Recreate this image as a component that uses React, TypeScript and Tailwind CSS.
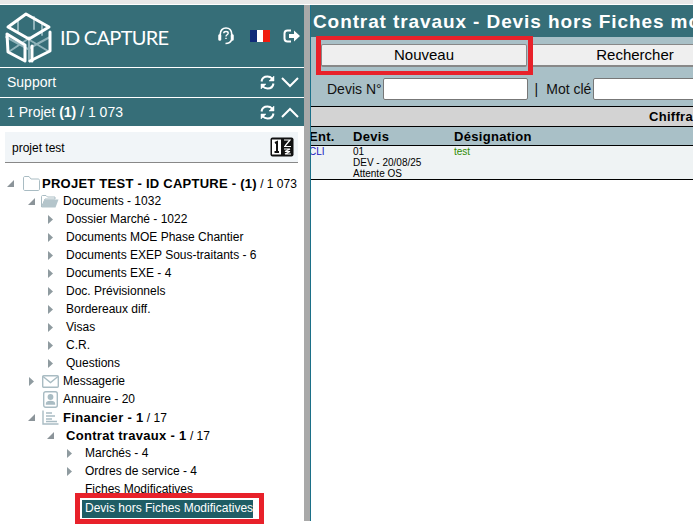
import { ReactNode } from 'react';

const TEAL = 'bg-[#366e78]';

function Logo() {
  return (
    <svg width="50" height="52" viewBox="0 0 50 52" fill="none" strokeLinejoin="round" strokeLinecap="round">
      <g stroke="#8fb3ba" strokeWidth="2">
        <path d="M14 10 L14 20 M30 6 L30 18 M25 26 L25 50 M2 26 L24 38 M24 38 L46 26 M6 40 L24 28 L44 40 M38 12 L38 24" />
      </g>
      <g stroke="#ffffff" strokeWidth="3">
        <path d="M22 3 L45 16 L25 28 L4 16 Z" />
        <path d="M3 23 L21 34 L21 50 L4 41 Z" />
        <path d="M26 50 L46 40 L46 21" />
        <path d="M28 35 L28 50" />
      </g>
    </svg>
  );
}

function Refresh() {
  return (
    <svg width="15" height="15" viewBox="0 0 15 15" fill="none" stroke="#fff" strokeWidth="2">
      <path d="M1.500 6.500 C2 3 4.500 1.500 7.500 1.500 C9.500 1.500 11 2.300 12.300 3.600" />
      <path d="M13.500 8.500 C13 12 10.500 13.500 7.500 13.500 C5.500 13.500 4 12.700 2.700 11.400" />
      <path d="M14 1 L14 6 L9 6 Z" fill="#fff" strokeWidth="0.500" />
      <path d="M1 14 L1 9 L6 9 Z" fill="#fff" strokeWidth="0.500" />
    </svg>
  );
}

function Chevron({ up }: { up?: boolean }) {
  return (
    <svg width="18" height="11" viewBox="0 0 18 11" fill="none" stroke="#fff" strokeWidth="2">
      <path d={up ? 'M1 10 L9 2 L17 10' : 'M1 1 L9 9 L17 1'} />
    </svg>
  );
}

function Headset() {
  return (
    <svg width="16" height="18" viewBox="0 0 16 18" fill="none" stroke="#fff" strokeWidth="1.700">
      <path d="M2.200 10 V7.500 C2.200 3.300 4.800 1 8 1 C11.200 1 13.800 3.300 13.800 7.500 V10" />
      <rect x="0.500" y="7.500" width="2.500" height="6" rx="1" fill="#fff" strokeWidth="0.500" />
      <rect x="13" y="7.500" width="2.500" height="6" rx="1" fill="#fff" strokeWidth="0.500" />
      <path d="M13.500 13 C12.500 15.800 10.500 16.500 7.500 16.500" />
      <path d="M5.800 6.200 C5.800 4 10.200 4 10.200 6.200 C10.200 7.800 8 7.800 8 9.500 M8 10.800 V12" strokeWidth="1.400" />
    </svg>
  );
}

function Logout() {
  return (
    <svg width="18" height="14" viewBox="0 0 18 14">
      <path d="M8 1.500 H4.500 C2.500 1.500 1.500 2.500 1.500 4.500 V9.500 C1.500 11.500 2.500 12.500 4.500 12.500 H8" fill="none" stroke="#fff" strokeWidth="2" />
      <path d="M6 5 H11 V1.500 L17 7 L11 12.500 V9 H6 Z" fill="#fff" />
    </svg>
  );
}

function SortIcon() {
  return (
    <svg width="24" height="20" viewBox="0 0 24 20">
      <rect x="0.500" y="0.500" width="23" height="19" rx="2" fill="#111" />
      <rect x="2" y="2.500" width="9" height="15" fill="#fff" />
      <path d="M5 6 L7 5 V15 M4.500 15 H9" fill="none" stroke="#111" strokeWidth="2" />
      <path d="M14 3 H20 L15 9 M14 9.500 H21 M14 12 H20 L15 14.500 H20 L15 17 H21" fill="none" stroke="#fff" strokeWidth="1.200" />
    </svg>
  );
}

function Arrow({ open }: { open?: boolean }) {
  if (open) {
    return (
      <svg width="7" height="7" viewBox="0 0 7 7" className="shrink-0">
        <path d="M7 0 V7 H0 Z" fill="#8b9499" />
      </svg>
    );
  }
  return (
    <svg width="6" height="9" viewBox="0 0 6 9" className="ml-px shrink-0">
      <path d="M0 0 L5 4.500 L0 9 Z" fill="#8f9ba0" />
    </svg>
  );
}

function FolderClosed() {
  return (
    <svg width="17" height="15" viewBox="0 0 17 15" fill="#fff" stroke="#a9bcc3">
      <path d="M0.500 13 V2 C0.500 1 1 0.500 2 0.500 H6 L8 3 H15 C16 3 16.500 3.500 16.500 4.500 V13 C16.500 14 16 14.500 15 14.500 H2 C1 14.500 0.500 14 0.500 13 Z" />
    </svg>
  );
}

function FolderOpen() {
  return (
    <svg width="18" height="13" viewBox="0 0 18 13">
      <path d="M0.500 12 V1.500 C0.500 1 1 0.500 1.500 0.500 H5 L6.500 2 H14 V4 H4 Z" fill="#fff" stroke="#a9bcc3" />
      <path d="M0.500 12.500 L3.500 4.500 H17.500 L14.500 12.500 Z" fill="#b4c5cb" />
    </svg>
  );
}

function Mail() {
  return (
    <svg width="17" height="13" viewBox="0 0 17 13" fill="none" stroke="#a9bcc3" strokeWidth="1.400">
      <rect x="0.700" y="0.700" width="15.600" height="11.600" rx="1" />
      <path d="M1 1.500 L8.500 7.500 L16 1.500" />
    </svg>
  );
}

function Contact() {
  return (
    <svg width="15" height="17" viewBox="0 0 15 17" fill="none" stroke="#a9bcc3" strokeWidth="1.400">
      <rect x="0.700" y="0.700" width="13.600" height="15.600" rx="2" />
      <circle cx="7.500" cy="6" r="2.200" fill="#a9bcc3" />
      <path d="M3.500 13 C3.500 9.500 11.500 9.500 11.500 13 Z" fill="#a9bcc3" />
    </svg>
  );
}

function ListIcon() {
  return (
    <svg width="17" height="15" viewBox="0 0 17 15" fill="none" stroke="#a9bcc3" strokeWidth="1.400">
      <path d="M1 0.500 V14 H16.500" />
      <path d="M4 3 H10 M4 6 H13 M4 9 H10 M4 11.500 H15" />
    </svg>
  );
}

// une ligne de l'arbre : retrait, flèche, icône puis libellé
function Row({ pad, arrow, icon, iconPad, gap, children }: { pad: string; arrow?: ReactNode; icon?: ReactNode; iconPad?: string; gap?: string; children: ReactNode }) {
  return (
    <div className={`flex h-[18px] items-center whitespace-nowrap ${pad}`}>
      <span className="flex w-[10px] shrink-0 items-center">{arrow}</span>
      {icon && <span className={`flex w-[25px] shrink-0 items-center justify-end ${iconPad}`}>{icon}</span>}
      <span className={gap}>{children}</span>
    </div>
  );
}

const docs = [
  'Dossier Marché - 1022',
  'Documents MOE Phase Chantier',
  'Documents EXEP Sous-traitants - 6',
  'Documents EXE - 4',
  'Doc. Prévisionnels',
  'Bordereaux diff.',
  'Visas',
  'C.R.',
  'Questions',
];

export default function App() {
  return (
    <div className="h-[525px] w-[693px] overflow-hidden bg-white text-black" style={{ fontFamily: '"Liberation Sans", Arial, sans-serif' }}>
      <div className="mb-px h-[4px] bg-[#e8e8e8]" />
      <div className="flex h-[516px]">
        {/* Colonne de gauche */}
        <div className="w-[304px] shrink-0">
          <div className={`flex h-[62px] items-center ${TEAL}`}>
            <div className="ml-[4px] mt-[2px]"><Logo /></div>
            <span className="ml-[6px] mt-[2px] text-[20px] tracking-[-0.7px] text-white" style={{ fontFamily: 'Lato, sans-serif' }}>ID CAPTURE</span>
            <div className="ml-auto mr-[3px] flex items-center">
              <Headset />
              <span className="ml-[16px] flex h-[12px] w-[20px]">
                <span className="w-1/3 bg-[#0f2a78]" />
                <span className="w-1/3 bg-white" />
                <span className="w-1/3 bg-[#f01c10]" />
              </span>
              <span className="ml-[13px]"><Logout /></span>
            </div>
          </div>
          <div className={`mt-px flex h-[29px] items-center justify-between pl-[7px] pr-[5px] text-sm text-white ${TEAL}`}>
            <span className="-mt-[2px]">Support</span>
            <span className="flex items-center gap-[6px]"><Refresh /><Chevron /></span>
          </div>
          <div className={`mt-px flex h-[28px] items-center justify-between pl-[7px] pr-[5px] text-sm text-white ${TEAL}`}>
            <span>1 Projet <b>(1)</b> / 1 073</span>
            <span className="flex items-center gap-[6px]"><Refresh /><Chevron up /></span>
          </div>
          <div className="ml-[5px] mt-[6px] flex h-[31px] w-[293px] items-center justify-between border-b border-[#888] bg-[#f1f5f8] pl-[7px] pr-[4px] text-xs">
            <span className="mt-[2px]">projet test</span>
            <SortIcon />
          </div>
          <div className="mt-[11px] text-xs leading-[18px]">
            <Row pad="pl-[7px]" arrow={<Arrow open />} icon={<FolderClosed />} iconPad="pr-[2px]">
              <span className="relative top-px text-[13px] font-bold tracking-[0.25px]">PROJET TEST - ID CAPTURE - (1)</span>
              <span className="relative top-px"> / 1 073</span>
            </Row>
            <Row pad="pl-[28px]" arrow={<Arrow open />} icon={<FolderOpen />} iconPad="pr-[4px]">Documents - 1032</Row>
            {docs.map((d) => (
              <Row key={d} pad="pl-[47px]" arrow={<Arrow />} gap="ml-[9px]">{d}</Row>
            ))}
            <Row pad="pl-[28px]" arrow={<Arrow />} icon={<Mail />} iconPad="pr-[4px]">Messagerie</Row>
            <Row pad="pl-[28px]" icon={<Contact />} iconPad="pr-[5px]">Annuaire - 20</Row>
            <Row pad="pl-[28px]" arrow={<Arrow open />} icon={<ListIcon />} iconPad="pr-[4px]">
              <span className="relative top-px"><b className="text-[13px] tracking-[0.3px]">Financier - 1</b> / 17</span>
            </Row>
            <Row pad="pl-[47px]" arrow={<Arrow open />} gap="ml-[9px]">
              <span className="relative top-px"><b className="text-[13px] tracking-[0.3px]">Contrat travaux - 1</b> / 17</span>
            </Row>
            <Row pad="pl-[66px]" arrow={<Arrow />} gap="ml-[9px]">Marchés - 4</Row>
            <Row pad="pl-[66px]" arrow={<Arrow />} gap="ml-[9px]">Ordres de service - 4</Row>
            <Row pad="pl-[66px]" gap="ml-[9px]">Fiches Modificatives</Row>
            <div className="relative ml-[82px] mt-[2px] h-[18px] w-[171px] whitespace-nowrap bg-[#1f5d65] pl-[3px] leading-[16px] text-white">
              Devis hors Fiches Modificatives
              <div className="absolute -bottom-[6px] -left-[7px] -right-[11px] -top-[7px] border-[5px] border-[#e8212a]" />
            </div>
          </div>
        </div>

        {/* Séparateur */}
        <div className="w-[6px] shrink-0 bg-[#a9a9a9]" />
        <div className="w-px shrink-0 bg-[#1c7088]" />

        {/* Partie droite */}
        <div className="relative min-w-0 flex-1 overflow-hidden">
          <div className={`flex h-[32px] items-center whitespace-nowrap pl-[2px] pt-[2px] text-[19px] font-bold tracking-[0.9px] text-white ${TEAL}`}>
            Contrat travaux - Devis hors Fiches modificatives
          </div>
          <div className="h-[69px] bg-[#a9c0c7]">
            <div className="flex gap-[4px] pl-[10px] pt-[7px]">
              <div className="flex h-[23px] w-[206px] shrink-0 items-center justify-center rounded-[2px] border border-b-2 border-[#888] bg-[#efefef] pt-px text-[15px]">Nouveau</div>
              <div className="flex h-[23px] w-[208px] shrink-0 items-center justify-center rounded-[2px] border border-b-2 border-[#888] bg-[#efefef] pt-px text-[15px]">Rechercher</div>
            </div>
            <div className="mt-[11px] flex items-center whitespace-nowrap text-sm text-[#111]">
              <span className="ml-[16px]">Devis N°</span>
              <span className="ml-px h-[22px] w-[145px] shrink-0 rounded-[2px] border border-[#777] bg-white" />
              <span className="ml-[7px]">|</span>
              <span className="ml-[8px]">Mot clé</span>
              <span className="ml-[2px] h-[22px] w-[200px] shrink-0 rounded-[2px] border border-[#777] bg-white" />
            </div>
          </div>
          <div className="flex h-[20px] items-center whitespace-nowrap border-t border-black bg-[#d3d3d3] pl-[338px] text-[13px] font-bold tracking-[0.3px]">Chiffrage</div>
          <div className="flex h-[20px] items-center whitespace-nowrap border-y border-black bg-[#a9c0c7] pt-[2px] text-[13px] font-bold tracking-[0.3px]">
            <span className="-ml-[2px] w-[44px]">Ent.</span>
            <span className="w-[101px]">Devis</span>
            <span>Désignation</span>
          </div>
          <div className="flex h-[34px] border-b border-black bg-[#eff3f4] text-[10px] leading-[11px]">
            <span className="-ml-[2px] w-[44px] text-[#2020c0]">CLI</span>
            <span className="w-[101px] text-black">01<br />DEV - 20/08/25<br />Attente OS</span>
            <span className="text-[#2e8b00]">test</span>
          </div>
          <div className="absolute left-[5px] top-[31px] h-[39px] w-[217px] border-x-[5px] border-y-[4px] border-[#e8212a]" />
        </div>
      </div>
    </div>
  );
}
